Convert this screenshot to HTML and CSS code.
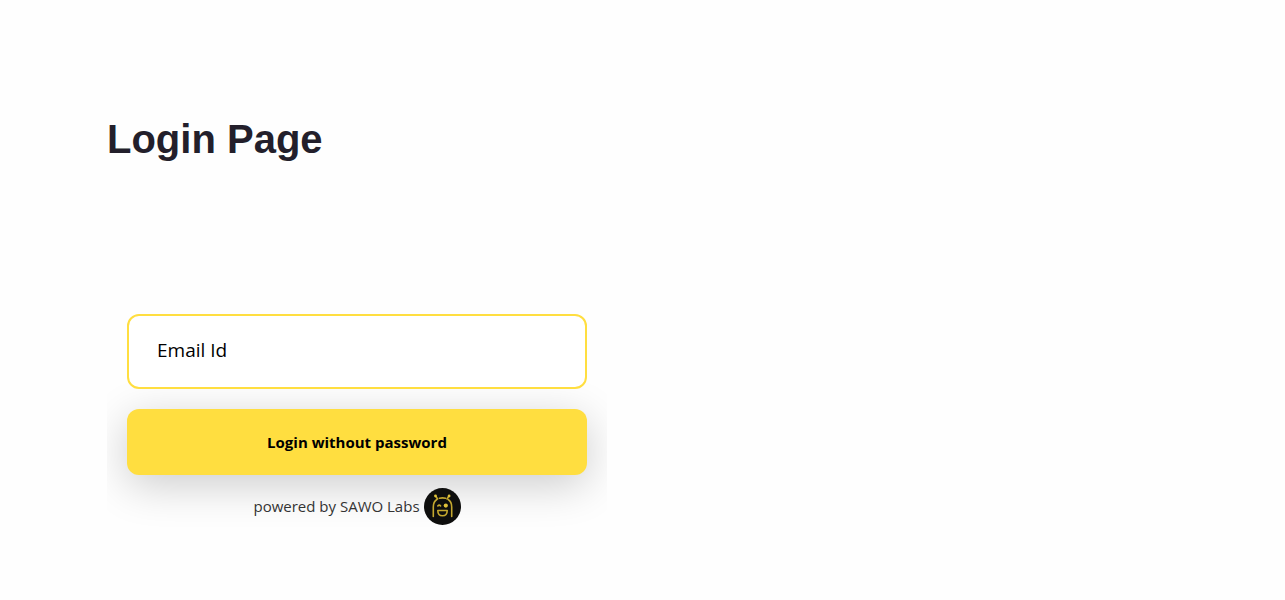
FILE: index.html
```html
<!DOCTYPE html>
<html lang="en">
<head>
<meta charset="utf-8">
<meta name="viewport" content="width=device-width, initial-scale=1">
<title>Login Page</title>
<link rel="stylesheet" href="styles.css">
</head>
<body>
<main class="page">
  <h1 class="title">Login Page</h1>
  <form class="login">
    <input class="email" type="email" aria-label="Email Id" placeholder="Email Id">
    <button class="submit" type="button">Login without password</button>
    <p class="credit">
      <span>powered by SAWO Labs</span>
      <svg class="logo" viewBox="0 0 37 37" aria-hidden="true">
        <circle cx="18.500" cy="18.500" r="18.500" fill="#0e0e0d"/>
        <g fill="none" stroke="#c4a82f" stroke-width="1.600" stroke-linecap="round" stroke-linejoin="round">
          <path d="M9.300 28.500V19c0-3.500 1.200-6 3.500-7.500M27.700 28.500V19c0-3.500-1.200-6-3.500-7.500M15.500 10.300q3-.9 6 0"/>
          <path d="M13.600 11l-2-3.200M23 11l2-3.200M13.800 18q1.400-1.700 2.800 0"/>
          <path d="M13.800 22.500h9.400c0 3.300-1.800 5.300-4.700 5.300s-4.700-2-4.700-5.300z"/>
        </g>
        <g fill="#e0c23a"><circle cx="11.500" cy="8" r="1.400"/><circle cx="25.100" cy="8" r="1.400"/><circle cx="21.800" cy="17.600" r="2.100"/></g>
      </svg>
    </p>
  </form>
</main>
</body>
</html>
```
FILE: styles.css
```css
* { box-sizing: border-box; }
body {
  margin: 0;
  background: #fefefe;
  font-family: "Open Sans", "Noto Sans", sans-serif;
}
.page { padding: 116px 107px 0; }
.title {
  margin: 0;
  color: #231f2b;
  font: bold 40px/46px "Liberation Sans", Arial, sans-serif;
}
.login {
  display: flex;
  flex-direction: column;
  gap: 20px;
  max-width: 500px;
  margin-top: 132px;
  padding: 20px;
  overflow: hidden;
}
.email {
  z-index: 1;
  width: 100%;
  padding: 22px 28px 24px;
  border: 2px solid #ffde40;
  border-radius: 12px;
  outline: 0;
  background: #fff;
  color: #000;
  font: 400 19px/25px "Open Sans", "Noto Sans", sans-serif;
}
.email::placeholder { color: #000; opacity: 1; }
.submit {
  padding: 22px;
  border: 0;
  border-radius: 12px;
  background: #ffde40;
  box-shadow: 0 10px 44px rgba(0, 0, 0, .2);
  color: #000;
  font: bold 15px/22px "Open Sans", "Noto Sans", sans-serif;
}
.credit {
  position: relative;
  display: flex;
  align-items: center;
  justify-content: center;
  gap: 4px;
  margin: -7px 0 0;
  color: #333;
  font-size: 15px;
  line-height: 22px;
}
.credit span { padding-bottom: 2px; }
.logo { width: 37px; height: 37px; }
```
